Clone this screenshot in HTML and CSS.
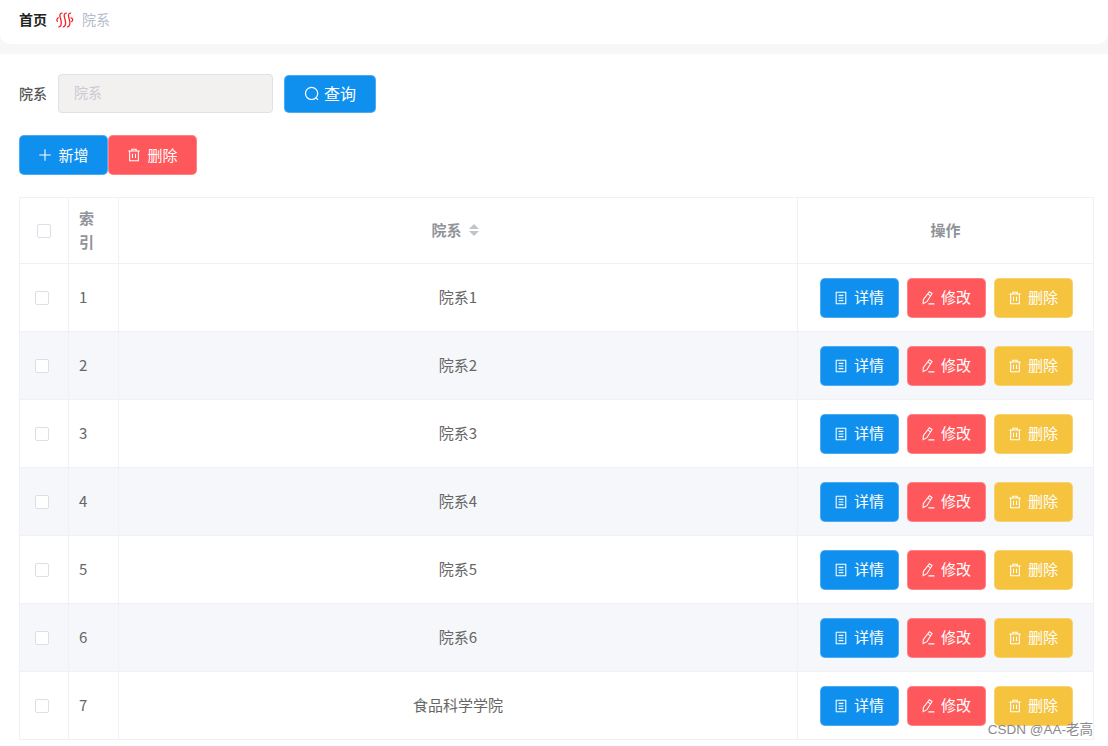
FILE: index.html
```html
<!DOCTYPE html>
<html lang="zh-CN">
  <head>
    <meta charset="UTF-8" />
    <meta name="viewport" content="width=device-width, initial-scale=1.0" />
    <title>院系</title>
    <link rel="stylesheet" href="styles.css">
  </head>
  <body>
    <svg class="icon-defs" width="0" height="0">
      <symbol id="i-search" viewBox="0 0 16 16"><circle cx="7.6" cy="7.4" r="6.1"/><path d="M12 11.8l2 2"/></symbol>
      <symbol id="i-plus" viewBox="0 0 16 16"><path d="M8 1.5v13M1.5 8h13"/></symbol>
      <symbol id="i-trash" viewBox="0 0 16 16"><path d="M1.5 3.5h13M5.5 3.5V1.5h5v2M3 3.5v11h10v-11M6.3 6.5v5M9.7 6.5v5"/></symbol>
      <symbol id="i-doc" viewBox="0 0 16 16"><path d="M2.5 1.5h11v13h-11zM5.3 5h5.4M5.3 8h5.4M5.3 11h5.4"/></symbol>
      <symbol id="i-edit" viewBox="0 0 16 16"><path d="M9.6 .8l3 2L6.8 12.2l-4.4 2.2.2-4.6zM8 3.6l3 2M8.5 14.7h6.8"/></symbol>
    </svg>

    <div class="crumb-wrap">
      <header class="crumb-bar">
        <span class="crumb-home">首页</span>
        <svg class="crumb-sep" viewBox="0 0 18 16" width="18" height="16">
          <path d="M6.5 1.2C4 .8 3.4 3 4.2 5.5S5.6 11.5 5 13 3.4 15 2.4 14.8M10.8 1.2C8.3 .8 7.7 3 8.5 5.5S9.9 11.5 9.3 13 7.7 15 6.7 14.8M15.1 1.2C12.6 .8 12 3 12.8 5.5S14.2 11.5 13.6 13 12 15 11 14.8M2.6 5.5C.8 6.5.4 8 1.6 9.8M14.6 5.5C17 6.5 17.5 8 15.4 10"/>
        </svg>
        <span class="crumb-current">院系</span>
      </header>
    </div>

    <main class="content">
      <form class="search-form">
        <label class="search-label" for="dept">院系</label>
        <input class="search-input" id="dept" placeholder="院系" />
        <button type="button" class="btn btn-blue btn-search"><svg class="icon"><use href="#i-search"/></svg>查询</button>
      </form>

      <div class="toolbar">
        <button type="button" class="btn btn-blue btn-tool"><svg class="icon"><use href="#i-plus"/></svg>新增</button>
        <button type="button" class="btn btn-red btn-tool"><svg class="icon"><use href="#i-trash"/></svg>删除</button>
      </div>

      <table class="dept-table">
        <colgroup>
          <col class="col-check" />
          <col class="col-index" />
          <col />
          <col class="col-actions" />
        </colgroup>
        <thead>
          <tr>
            <th><span class="checkbox"></span></th>
            <th class="cell-left">索<br />引</th>
            <th class="head-name">院系<span class="sort"><i class="sort-up"></i><i class="sort-down"></i></span></th>
            <th>操作</th>
          </tr>
        </thead>
        <tbody id="rows"></tbody>
      </table>
    </main>

    <div class="watermark">CSDN @AA-老高</div>

    <script>
      const names = ["院系1", "院系2", "院系3", "院系4", "院系5", "院系6", "食品科学学院"];

      function createRow(name, i) {
        return `
          <tr>
            <td><span class="checkbox checkbox-row"></span></td>
            <td class="cell-left cell-text">${i + 1}</td>
            <td class="cell-text">${name}</td>
            <td>
              <div class="actions">
                <button type="button" class="btn btn-blue btn-row"><svg class="icon"><use href="#i-doc"/></svg>详情</button>
                <button type="button" class="btn btn-red btn-row"><svg class="icon"><use href="#i-edit"/></svg>修改</button>
                <button type="button" class="btn btn-yellow btn-row"><svg class="icon"><use href="#i-trash"/></svg>删除</button>
              </div>
            </td>
          </tr>`;
      }

      document.getElementById("rows").innerHTML = names.map(createRow).join("");
    </script>
  </body>
</html>
```

FILE: styles.css
```css
* {
  margin: 0;
  padding: 0;
  box-sizing: border-box;
  font-family: "Noto Sans CJK SC", "Liberation Sans", sans-serif;
}

html,
body {
  height: 746px;
  overflow: hidden;
}

body {
  background-color: #fff;
  position: relative;
}

.icon-defs {
  position: absolute;
}

.crumb-wrap {
  padding-bottom: 10px;
  background-color: #f6f7f9;
}

.crumb-bar {
  height: 44px;
  padding: 0 19px 6px;
  display: flex;
  align-items: center;
  font-size: 14px;
  background-color: #fff;
  border-radius: 0 0 10px 10px;
}

.crumb-home {
  color: #222;
  font-weight: 700;
}

.crumb-sep {
  margin: 2px 8px 0 9px;
  fill: none;
  stroke: #f5222d;
  stroke-width: 1.3;
}

.crumb-current {
  color: #b4bccc;
}

.content {
  padding: 20px 14px 0 19px;
}

.search-form {
  display: flex;
  align-items: center;
  height: 39px;
}

.search-label {
  width: 39px;
  padding-bottom: 2px;
  font-size: 14px;
  color: #555;
  font-weight: 500;
}

.search-input {
  width: 215px;
  height: 39px;
  padding: 0 15px 3px;
  font-size: 14px;
  background-color: #f3f0f0;
  border: 1px solid #dfe1ea;
  border-radius: 4px;
  outline: none;
}

.search-input::placeholder {
  color: #c8cbd3;
}

.btn {
  display: inline-flex;
  align-items: center;
  justify-content: center;
  padding-bottom: 2px;
  color: #fff;
  border: 1px solid rgba(255, 255, 255, 0.25);
  border-radius: 5px;
  cursor: pointer;
}

.icon {
  width: 14px;
  height: 14px;
  margin: 2px 6px 0 0;
  fill: none;
  stroke: currentColor;
  stroke-width: 1.2;
}

.btn-blue {
  background-color: #1090ee;
}

.btn-red {
  background-color: #ff585c;
}

.btn-yellow {
  background-color: #f5c33e;
}

.btn-search {
  width: 92px;
  height: 38px;
  margin-left: 11px;
  font-size: 16px;
}

.btn-search .icon {
  width: 16px;
  height: 16px;
  margin-right: 4px;
}

.toolbar {
  display: flex;
  margin-top: 22px;
}

.btn-tool {
  width: 89px;
  height: 40px;
  font-size: 15px;
}

.dept-table {
  width: 100%;
  margin-top: 22px;
  border-collapse: collapse;
  table-layout: fixed;
  font-size: 15px;
  color: #666;
}

.col-check {
  width: 49px;
}

.col-index {
  width: 50px;
}

.col-actions {
  width: 296px;
}

.dept-table th,
.dept-table td {
  border: 1px solid #eff1f6;
  text-align: center;
  vertical-align: middle;
}

.dept-table th {
  height: 66px;
  padding-bottom: 2px;
  font-size: 15px;
  line-height: 24px;
  color: #909399;
  font-weight: 700;
}

.dept-table td {
  height: 68px;
}

.dept-table td.cell-text {
  padding-bottom: 2px;
}

.dept-table .cell-left {
  text-align: left;
  padding-left: 10px;
}

.head-name {
  padding-right: 6px;
}

.dept-table tbody tr:nth-child(even) {
  background-color: #f5f7fa;
}

.checkbox {
  display: block;
  width: 14px;
  height: 14px;
  margin: 2px auto 0;
  background-color: #fff;
  border: 1px solid #dcdfe6;
  border-radius: 2px;
}

.checkbox-row {
  margin: 0 0 0 15px;
}

.sort {
  display: inline-flex;
  flex-direction: column;
  gap: 2px;
  margin-left: 7px;
  vertical-align: 7px;
}

.sort i {
  display: block;
  border-left: 5px solid transparent;
  border-right: 5px solid transparent;
}

.sort-up {
  border-bottom: 5px solid #c0c4cc;
}

.sort-down {
  border-top: 5px solid #c0c4cc;
}

.actions {
  display: flex;
  justify-content: center;
  gap: 8px;
  padding-left: 1px;
}

.btn-row {
  width: 79px;
  height: 40px;
  font-size: 15px;
}

.watermark {
  position: absolute;
  right: 15px;
  bottom: 7px;
  font-family: "Liberation Sans", "Noto Sans CJK SC", sans-serif;
  font-size: 13.5px;
  line-height: 18px;
  color: #8a8a8a;
}
```
